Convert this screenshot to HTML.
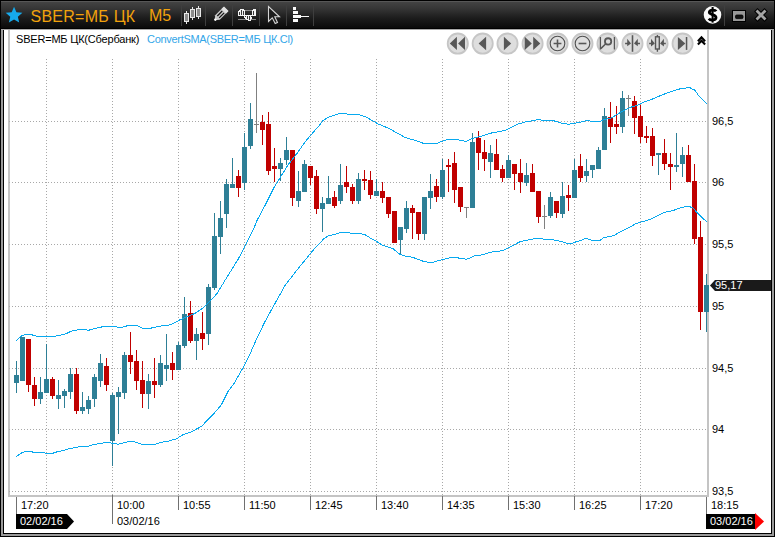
<!DOCTYPE html><html><head><meta charset="utf-8"><style>html,body{margin:0;padding:0;width:775px;height:537px;overflow:hidden;background:#fff}svg{display:block;position:absolute;left:0;top:0}text{font-family:"Liberation Sans",sans-serif}</style></head><body>
<svg width="775" height="537" viewBox="0 0 775 537">
<defs><linearGradient id="tb" x1="0" y1="0" x2="0" y2="1"><stop offset="0" stop-color="#474747"/><stop offset="0.3" stop-color="#363636"/><stop offset="0.65" stop-color="#1c1c1c"/><stop offset="1" stop-color="#0a0a0a"/></linearGradient></defs>
<rect x="0" y="0" width="775" height="537" fill="#fff"/>
<g shape-rendering="crispEdges">
<rect x="0" y="0" width="1" height="537" fill="#000"/>
<rect x="1" y="29" width="2" height="507" fill="#9a9a9a"/>
<rect x="3" y="30" width="1" height="504" fill="#000"/>
<rect x="774" y="0" width="1" height="537" fill="#000"/>
<rect x="772" y="29" width="2" height="507" fill="#9a9a9a"/>
<rect x="771" y="30" width="1" height="504" fill="#000"/>
<rect x="0" y="536" width="775" height="1" fill="#000"/>
<rect x="1" y="534" width="773" height="2" fill="#9a9a9a"/>
<rect x="3" y="533" width="769" height="1" fill="#000"/>
<rect x="0" y="0" width="775" height="28" fill="url(#tb)"/>
<rect x="0" y="0" width="775" height="1" fill="#000"/>
<rect x="1" y="1" width="773" height="1" fill="#575757"/>
<rect x="0" y="28" width="775" height="1" fill="#000"/>
<rect x="1" y="29" width="773" height="1" fill="#a8a8a8"/>
<rect x="0" y="0" width="1" height="29" fill="#000"/>
<rect x="774" y="0" width="1" height="29" fill="#000"/>
</g>
<g shape-rendering="crispEdges">
<rect x="8" y="30" width="2" height="467" fill="#c4c4c4"/>
<rect x="707" y="30" width="2" height="467" fill="#c4c4c4"/>
<rect x="8" y="495" width="701" height="2" fill="#c4c4c4"/>
<line x1="9" y1="121.5" x2="707" y2="121.5" stroke="#a8a8a8" stroke-width="1" stroke-dasharray="1 2"/>
<line x1="9" y1="182.5" x2="707" y2="182.5" stroke="#a8a8a8" stroke-width="1" stroke-dasharray="1 2"/>
<line x1="9" y1="244.5" x2="707" y2="244.5" stroke="#a8a8a8" stroke-width="1" stroke-dasharray="1 2"/>
<line x1="9" y1="306.5" x2="707" y2="306.5" stroke="#a8a8a8" stroke-width="1" stroke-dasharray="1 2"/>
<line x1="9" y1="368.5" x2="707" y2="368.5" stroke="#a8a8a8" stroke-width="1" stroke-dasharray="1 2"/>
<line x1="9" y1="429.5" x2="707" y2="429.5" stroke="#a8a8a8" stroke-width="1" stroke-dasharray="1 2"/>
<line x1="9" y1="491.5" x2="707" y2="491.5" stroke="#a8a8a8" stroke-width="1" stroke-dasharray="1 2"/>
<line x1="46.5" y1="59" x2="46.5" y2="495" stroke="#a8a8a8" stroke-width="1" stroke-dasharray="1 2"/>
<line x1="112.5" y1="59" x2="112.5" y2="495" stroke="#a8a8a8" stroke-width="1" stroke-dasharray="1 2"/>
<line x1="178.5" y1="59" x2="178.5" y2="495" stroke="#a8a8a8" stroke-width="1" stroke-dasharray="1 2"/>
<line x1="244.5" y1="59" x2="244.5" y2="495" stroke="#a8a8a8" stroke-width="1" stroke-dasharray="1 2"/>
<line x1="310.5" y1="59" x2="310.5" y2="495" stroke="#a8a8a8" stroke-width="1" stroke-dasharray="1 2"/>
<line x1="376.5" y1="59" x2="376.5" y2="495" stroke="#a8a8a8" stroke-width="1" stroke-dasharray="1 2"/>
<line x1="442.5" y1="59" x2="442.5" y2="495" stroke="#a8a8a8" stroke-width="1" stroke-dasharray="1 2"/>
<line x1="508.5" y1="59" x2="508.5" y2="495" stroke="#a8a8a8" stroke-width="1" stroke-dasharray="1 2"/>
<line x1="574.5" y1="59" x2="574.5" y2="495" stroke="#a8a8a8" stroke-width="1" stroke-dasharray="1 2"/>
<line x1="640.5" y1="59" x2="640.5" y2="495" stroke="#a8a8a8" stroke-width="1" stroke-dasharray="1 2"/>
</g>
<g shape-rendering="crispEdges">
<rect x="16" y="361" width="1" height="32" fill="#2e7f96"/>
<rect x="14" y="375" width="5" height="8" fill="#2e7f96"/>
<rect x="22" y="337" width="1" height="44" fill="#2e7f96"/>
<rect x="20" y="337" width="5" height="44" fill="#2e7f96"/>
<rect x="28" y="339" width="1" height="53" fill="#c00000"/>
<rect x="26" y="339" width="5" height="46" fill="#c00000"/>
<rect x="34" y="377" width="1" height="29" fill="#c00000"/>
<rect x="32" y="385" width="5" height="14" fill="#c00000"/>
<rect x="40" y="377" width="1" height="27" fill="#2e7f96"/>
<rect x="38" y="392" width="5" height="7" fill="#2e7f96"/>
<rect x="46" y="344" width="1" height="49" fill="#2e7f96"/>
<rect x="44" y="379" width="5" height="14" fill="#2e7f96"/>
<rect x="52" y="377" width="1" height="22" fill="#c00000"/>
<rect x="50" y="379" width="5" height="17" fill="#c00000"/>
<rect x="58" y="380" width="1" height="29" fill="#2e7f96"/>
<rect x="56" y="395" width="5" height="4" fill="#2e7f96"/>
<rect x="64" y="389" width="1" height="19" fill="#2e7f96"/>
<rect x="62" y="391" width="5" height="5" fill="#2e7f96"/>
<rect x="70" y="368" width="1" height="31" fill="#2e7f96"/>
<rect x="68" y="374" width="5" height="18" fill="#2e7f96"/>
<rect x="76" y="368" width="1" height="46" fill="#c00000"/>
<rect x="74" y="374" width="5" height="37" fill="#c00000"/>
<rect x="82" y="392" width="1" height="22" fill="#2e7f96"/>
<rect x="80" y="407" width="5" height="4" fill="#2e7f96"/>
<rect x="88" y="396" width="1" height="18" fill="#2e7f96"/>
<rect x="86" y="400" width="5" height="9" fill="#2e7f96"/>
<rect x="94" y="374" width="1" height="33" fill="#2e7f96"/>
<rect x="92" y="377" width="5" height="22" fill="#2e7f96"/>
<rect x="100" y="354" width="1" height="33" fill="#2e7f96"/>
<rect x="98" y="363" width="5" height="18" fill="#2e7f96"/>
<rect x="106" y="358" width="1" height="33" fill="#c00000"/>
<rect x="104" y="366" width="5" height="19" fill="#c00000"/>
<rect x="112" y="393" width="1" height="73" fill="#2e7f96"/>
<rect x="110" y="395" width="5" height="46" fill="#2e7f96"/>
<rect x="118" y="387" width="1" height="47" fill="#2e7f96"/>
<rect x="116" y="392" width="5" height="5" fill="#2e7f96"/>
<rect x="124" y="352" width="1" height="47" fill="#2e7f96"/>
<rect x="122" y="355" width="5" height="38" fill="#2e7f96"/>
<rect x="130" y="332" width="1" height="42" fill="#c00000"/>
<rect x="128" y="355" width="5" height="7" fill="#c00000"/>
<rect x="136" y="350" width="1" height="40" fill="#c00000"/>
<rect x="134" y="361" width="5" height="20" fill="#c00000"/>
<rect x="142" y="361" width="1" height="47" fill="#c00000"/>
<rect x="140" y="380" width="5" height="14" fill="#c00000"/>
<rect x="148" y="374" width="1" height="35" fill="#2e7f96"/>
<rect x="146" y="381" width="5" height="13" fill="#2e7f96"/>
<rect x="154" y="358" width="1" height="40" fill="#c00000"/>
<rect x="152" y="381" width="5" height="4" fill="#c00000"/>
<rect x="160" y="355" width="1" height="32" fill="#2e7f96"/>
<rect x="158" y="363" width="5" height="22" fill="#2e7f96"/>
<rect x="166" y="334" width="1" height="47" fill="#2e7f96"/>
<rect x="164" y="365" width="5" height="4" fill="#2e7f96"/>
<rect x="172" y="352" width="1" height="28" fill="#c00000"/>
<rect x="170" y="363" width="5" height="7" fill="#c00000"/>
<rect x="178" y="342" width="1" height="28" fill="#2e7f96"/>
<rect x="176" y="345" width="5" height="25" fill="#2e7f96"/>
<rect x="184" y="297" width="1" height="51" fill="#2e7f96"/>
<rect x="182" y="314" width="5" height="32" fill="#2e7f96"/>
<rect x="190" y="301" width="1" height="42" fill="#c00000"/>
<rect x="188" y="313" width="5" height="28" fill="#c00000"/>
<rect x="196" y="328" width="1" height="32" fill="#2e7f96"/>
<rect x="194" y="334" width="5" height="7" fill="#2e7f96"/>
<rect x="202" y="312" width="1" height="38" fill="#c00000"/>
<rect x="200" y="333" width="5" height="6" fill="#c00000"/>
<rect x="208" y="284" width="1" height="61" fill="#2e7f96"/>
<rect x="206" y="287" width="5" height="47" fill="#2e7f96"/>
<rect x="214" y="213" width="1" height="77" fill="#2e7f96"/>
<rect x="212" y="236" width="5" height="52" fill="#2e7f96"/>
<rect x="220" y="201" width="1" height="53" fill="#2e7f96"/>
<rect x="218" y="218" width="5" height="19" fill="#2e7f96"/>
<rect x="226" y="179" width="1" height="49" fill="#2e7f96"/>
<rect x="224" y="184" width="5" height="30" fill="#2e7f96"/>
<rect x="232" y="158" width="1" height="30" fill="#2e7f96"/>
<rect x="230" y="184" width="5" height="4" fill="#2e7f96"/>
<rect x="238" y="170" width="1" height="27" fill="#c00000"/>
<rect x="236" y="176" width="5" height="12" fill="#c00000"/>
<rect x="244" y="133" width="1" height="57" fill="#2e7f96"/>
<rect x="242" y="147" width="5" height="36" fill="#2e7f96"/>
<rect x="250" y="103" width="1" height="46" fill="#2e7f96"/>
<rect x="248" y="119" width="5" height="27" fill="#2e7f96"/>
<rect x="256" y="73" width="1" height="60" fill="#808080"/>
<rect x="254" y="124" width="5" height="1" fill="#808080"/>
<rect x="262" y="115" width="1" height="30" fill="#c00000"/>
<rect x="260" y="122" width="5" height="8" fill="#c00000"/>
<rect x="268" y="112" width="1" height="63" fill="#c00000"/>
<rect x="266" y="124" width="5" height="47" fill="#c00000"/>
<rect x="274" y="148" width="1" height="34" fill="#c00000"/>
<rect x="272" y="166" width="5" height="3" fill="#c00000"/>
<rect x="280" y="158" width="1" height="23" fill="#2e7f96"/>
<rect x="278" y="163" width="5" height="6" fill="#2e7f96"/>
<rect x="286" y="137" width="1" height="28" fill="#2e7f96"/>
<rect x="284" y="150" width="5" height="10" fill="#2e7f96"/>
<rect x="292" y="150" width="1" height="56" fill="#c00000"/>
<rect x="290" y="150" width="5" height="48" fill="#c00000"/>
<rect x="298" y="171" width="1" height="36" fill="#2e7f96"/>
<rect x="296" y="191" width="5" height="10" fill="#2e7f96"/>
<rect x="304" y="160" width="1" height="32" fill="#2e7f96"/>
<rect x="302" y="164" width="5" height="28" fill="#2e7f96"/>
<rect x="310" y="166" width="1" height="19" fill="#c00000"/>
<rect x="308" y="166" width="5" height="12" fill="#c00000"/>
<rect x="316" y="170" width="1" height="44" fill="#c00000"/>
<rect x="314" y="176" width="5" height="33" fill="#c00000"/>
<rect x="322" y="197" width="1" height="35" fill="#2e7f96"/>
<rect x="320" y="203" width="5" height="6" fill="#2e7f96"/>
<rect x="328" y="176" width="1" height="28" fill="#2e7f96"/>
<rect x="326" y="198" width="5" height="6" fill="#2e7f96"/>
<rect x="334" y="191" width="1" height="17" fill="#c00000"/>
<rect x="332" y="197" width="5" height="9" fill="#c00000"/>
<rect x="340" y="164" width="1" height="40" fill="#2e7f96"/>
<rect x="338" y="185" width="5" height="16" fill="#2e7f96"/>
<rect x="346" y="166" width="1" height="27" fill="#c00000"/>
<rect x="344" y="182" width="5" height="5" fill="#c00000"/>
<rect x="352" y="184" width="1" height="20" fill="#c00000"/>
<rect x="350" y="187" width="5" height="14" fill="#c00000"/>
<rect x="358" y="173" width="1" height="31" fill="#2e7f96"/>
<rect x="356" y="179" width="5" height="22" fill="#2e7f96"/>
<rect x="364" y="170" width="1" height="20" fill="#c00000"/>
<rect x="362" y="179" width="5" height="2" fill="#c00000"/>
<rect x="370" y="171" width="1" height="28" fill="#c00000"/>
<rect x="368" y="180" width="5" height="15" fill="#c00000"/>
<rect x="376" y="179" width="1" height="17" fill="#2e7f96"/>
<rect x="374" y="191" width="5" height="5" fill="#2e7f96"/>
<rect x="382" y="182" width="1" height="21" fill="#c00000"/>
<rect x="380" y="191" width="5" height="7" fill="#c00000"/>
<rect x="388" y="197" width="1" height="21" fill="#c00000"/>
<rect x="386" y="197" width="5" height="17" fill="#c00000"/>
<rect x="394" y="211" width="1" height="32" fill="#c00000"/>
<rect x="392" y="211" width="5" height="32" fill="#c00000"/>
<rect x="400" y="227" width="1" height="27" fill="#2e7f96"/>
<rect x="398" y="227" width="5" height="13" fill="#2e7f96"/>
<rect x="406" y="201" width="1" height="32" fill="#2e7f96"/>
<rect x="404" y="208" width="5" height="21" fill="#2e7f96"/>
<rect x="412" y="205" width="1" height="34" fill="#c00000"/>
<rect x="410" y="208" width="5" height="5" fill="#c00000"/>
<rect x="418" y="212" width="1" height="28" fill="#c00000"/>
<rect x="416" y="212" width="5" height="22" fill="#c00000"/>
<rect x="424" y="197" width="1" height="43" fill="#2e7f96"/>
<rect x="422" y="197" width="5" height="37" fill="#2e7f96"/>
<rect x="430" y="174" width="1" height="35" fill="#2e7f96"/>
<rect x="428" y="191" width="5" height="7" fill="#2e7f96"/>
<rect x="436" y="179" width="1" height="23" fill="#c00000"/>
<rect x="434" y="186" width="5" height="11" fill="#c00000"/>
<rect x="442" y="159" width="1" height="40" fill="#2e7f96"/>
<rect x="440" y="170" width="5" height="27" fill="#2e7f96"/>
<rect x="448" y="159" width="1" height="33" fill="#c00000"/>
<rect x="446" y="165" width="5" height="2" fill="#c00000"/>
<rect x="454" y="152" width="1" height="51" fill="#c00000"/>
<rect x="452" y="163" width="5" height="27" fill="#c00000"/>
<rect x="460" y="187" width="1" height="25" fill="#c00000"/>
<rect x="458" y="187" width="5" height="20" fill="#c00000"/>
<rect x="466" y="207" width="1" height="11" fill="#808080"/>
<rect x="464" y="207" width="5" height="1" fill="#808080"/>
<rect x="472" y="133" width="1" height="75" fill="#2e7f96"/>
<rect x="470" y="142" width="5" height="66" fill="#2e7f96"/>
<rect x="478" y="131" width="1" height="39" fill="#c00000"/>
<rect x="476" y="138" width="5" height="15" fill="#c00000"/>
<rect x="484" y="140" width="1" height="31" fill="#c00000"/>
<rect x="482" y="152" width="5" height="7" fill="#c00000"/>
<rect x="490" y="145" width="1" height="33" fill="#2e7f96"/>
<rect x="488" y="153" width="5" height="9" fill="#2e7f96"/>
<rect x="496" y="139" width="1" height="31" fill="#c00000"/>
<rect x="494" y="154" width="5" height="16" fill="#c00000"/>
<rect x="502" y="165" width="1" height="17" fill="#c00000"/>
<rect x="500" y="169" width="5" height="9" fill="#c00000"/>
<rect x="508" y="155" width="1" height="23" fill="#2e7f96"/>
<rect x="506" y="160" width="5" height="18" fill="#2e7f96"/>
<rect x="514" y="164" width="1" height="26" fill="#c00000"/>
<rect x="512" y="164" width="5" height="10" fill="#c00000"/>
<rect x="520" y="159" width="1" height="34" fill="#c00000"/>
<rect x="518" y="173" width="5" height="9" fill="#c00000"/>
<rect x="526" y="163" width="1" height="23" fill="#2e7f96"/>
<rect x="524" y="175" width="5" height="8" fill="#2e7f96"/>
<rect x="532" y="164" width="1" height="28" fill="#c00000"/>
<rect x="530" y="173" width="5" height="19" fill="#c00000"/>
<rect x="538" y="191" width="1" height="32" fill="#c00000"/>
<rect x="536" y="191" width="5" height="26" fill="#c00000"/>
<rect x="544" y="205" width="1" height="24" fill="#808080"/>
<rect x="542" y="216" width="5" height="1" fill="#808080"/>
<rect x="550" y="192" width="1" height="26" fill="#2e7f96"/>
<rect x="548" y="197" width="5" height="19" fill="#2e7f96"/>
<rect x="556" y="201" width="1" height="17" fill="#c00000"/>
<rect x="554" y="201" width="5" height="12" fill="#c00000"/>
<rect x="562" y="182" width="1" height="36" fill="#2e7f96"/>
<rect x="560" y="196" width="5" height="18" fill="#2e7f96"/>
<rect x="568" y="185" width="1" height="26" fill="#c00000"/>
<rect x="566" y="195" width="5" height="3" fill="#c00000"/>
<rect x="574" y="159" width="1" height="39" fill="#2e7f96"/>
<rect x="572" y="170" width="5" height="28" fill="#2e7f96"/>
<rect x="580" y="154" width="1" height="28" fill="#c00000"/>
<rect x="578" y="166" width="5" height="12" fill="#c00000"/>
<rect x="586" y="159" width="1" height="23" fill="#2e7f96"/>
<rect x="584" y="171" width="5" height="5" fill="#2e7f96"/>
<rect x="592" y="165" width="1" height="13" fill="#2e7f96"/>
<rect x="590" y="165" width="5" height="5" fill="#2e7f96"/>
<rect x="598" y="147" width="1" height="22" fill="#2e7f96"/>
<rect x="596" y="150" width="5" height="19" fill="#2e7f96"/>
<rect x="604" y="108" width="1" height="42" fill="#2e7f96"/>
<rect x="602" y="116" width="5" height="34" fill="#2e7f96"/>
<rect x="610" y="102" width="1" height="41" fill="#c00000"/>
<rect x="608" y="117" width="5" height="10" fill="#c00000"/>
<rect x="616" y="106" width="1" height="28" fill="#c00000"/>
<rect x="614" y="124" width="5" height="3" fill="#c00000"/>
<rect x="622" y="91" width="1" height="42" fill="#2e7f96"/>
<rect x="620" y="98" width="5" height="29" fill="#2e7f96"/>
<rect x="628" y="95" width="1" height="21" fill="#808080"/>
<rect x="626" y="98" width="5" height="1" fill="#808080"/>
<rect x="634" y="96" width="1" height="38" fill="#c00000"/>
<rect x="632" y="101" width="5" height="17" fill="#c00000"/>
<rect x="640" y="105" width="1" height="38" fill="#c00000"/>
<rect x="638" y="116" width="5" height="21" fill="#c00000"/>
<rect x="646" y="126" width="1" height="17" fill="#c00000"/>
<rect x="644" y="136" width="5" height="2" fill="#c00000"/>
<rect x="652" y="128" width="1" height="38" fill="#c00000"/>
<rect x="650" y="136" width="5" height="20" fill="#c00000"/>
<rect x="658" y="153" width="1" height="22" fill="#2e7f96"/>
<rect x="656" y="153" width="5" height="2" fill="#2e7f96"/>
<rect x="664" y="139" width="1" height="31" fill="#c00000"/>
<rect x="662" y="153" width="5" height="11" fill="#c00000"/>
<rect x="670" y="153" width="1" height="37" fill="#c00000"/>
<rect x="668" y="164" width="5" height="3" fill="#c00000"/>
<rect x="676" y="133" width="1" height="39" fill="#2e7f96"/>
<rect x="674" y="165" width="5" height="2" fill="#2e7f96"/>
<rect x="682" y="147" width="1" height="30" fill="#2e7f96"/>
<rect x="680" y="155" width="5" height="9" fill="#2e7f96"/>
<rect x="688" y="145" width="1" height="37" fill="#c00000"/>
<rect x="686" y="155" width="5" height="27" fill="#c00000"/>
<rect x="694" y="164" width="1" height="80" fill="#c00000"/>
<rect x="692" y="181" width="5" height="58" fill="#c00000"/>
<rect x="700" y="221" width="1" height="109" fill="#c00000"/>
<rect x="698" y="237" width="5" height="75" fill="#c00000"/>
<rect x="706" y="274" width="1" height="58" fill="#2e7f96"/>
<rect x="704" y="285" width="5" height="27" fill="#2e7f96"/>
</g>
<polyline points="16.2,340.7 21.9,335.5 26.6,334.2 31.5,334.5 33.7,335.5 38.2,336.4 45.6,336.4 55.3,336.4 57.5,335.5 61.2,334.9 66.4,333.7 70.8,331.2 75.3,330.3 81.2,329.3 85.7,329.3 87.9,330.5 94.6,328.5 99.0,327.5 105.0,326.3 115.3,326.3 118.3,327.5 121.3,327.5 125.0,326.5 128.5,325.3 136.6,325.3 142.4,328.1 151.1,328.1 158.7,326.5 164.5,325.3 169.1,325.0 173.8,323.2 179.6,320.0 185.4,317.4 192.4,314.5 195.0,313.3 201.0,309.4 205.4,305.9 211.4,299.9 216.6,294.0 221.1,286.9 225.5,279.5 231.8,269.4 238.5,258.6 246.0,244.3 253.6,229.2 256.7,221.0 265.0,205.4 273.4,188.6 280.1,177.7 288.5,164.3 296.9,153.5 305.3,141.7 314.5,130.8 319.0,125.7 322.4,121.2 326.9,117.9 331.3,116.2 336.9,114.5 340.3,113.4 343.6,113.6 350.0,114.3 358.8,114.6 365.5,116.8 372.2,120.5 377.2,123.5 389.0,128.5 397.4,133.2 405.8,137.8 414.2,140.0 423.4,143.3 436.8,143.3 447.7,139.4 457.0,139.7 466.2,141.4 472.0,138.6 478.8,136.9 487.1,134.4 490.0,133.4 493.9,132.4 500.1,131.5 505.5,130.3 508.6,128.6 513.2,126.3 517.1,124.3 521.0,123.3 524.1,122.2 528.7,121.5 533.3,120.4 539.5,119.4 542.6,120.4 550.0,120.4 553.2,120.6 561.9,123.2 568.5,124.3 577.3,122.8 587.2,120.4 592.6,121.5 599.9,121.3 603.7,119.8 611.5,117.8 616.9,114.7 621.5,111.6 627.0,108.9 632.4,106.6 636.2,105.8 639.3,104.3 644.0,102.0 650.0,100.0 655.0,98.0 660.1,95.7 665.5,93.6 672.4,91.3 678.6,89.3 681.7,88.3 685.6,88.3 687.2,87.4 689.5,87.4 691.8,88.8 694.1,89.6 697.2,93.2 698.0,95.0 706.9,103.6" fill="none" stroke="#08a9ef" stroke-width="1" shape-rendering="crispEdges"/>
<polyline points="16.2,456.5 22.6,452.4 27.1,451.4 31.5,451.7 33.7,452.4 43.4,452.4 46.4,453.5 53.0,453.2 57.5,451.7 63.4,450.5 70.1,448.4 75.3,447.6 81.2,446.5 88.6,446.2 94.6,444.3 100.5,443.5 105.7,442.5 112.4,443.1 118.3,444.3 124.5,442.5 130.4,441.4 134.1,441.7 141.5,444.3 155.6,444.3 160.1,442.5 169.0,441.0 176.4,438.8 183.8,434.3 191.2,432.1 201.6,426.2 211.4,416.2 217.0,410.1 221.5,404.5 225.4,396.7 228.2,391.1 233.4,384.5 242.6,368.6 250.2,353.5 256.6,339.0 264.5,322.5 273.5,306.1 285.2,285.2 296.9,270.1 309.5,254.7 313.5,249.8 317.7,245.1 323.9,238.8 328.8,235.5 334.2,234.7 340.4,232.4 348.9,232.4 351.2,233.5 360.5,233.5 365.1,234.7 371.3,238.6 376.0,240.9 382.2,245.1 388.4,247.1 393.0,248.6 400.0,254.5 405.2,256.1 410.3,256.8 415.5,258.3 423.2,261.3 428.4,262.2 433.5,262.2 438.7,260.4 443.9,259.4 451.6,257.4 456.8,257.4 459.4,258.3 463.2,258.3 465.8,259.4 469.7,258.1 473.5,256.1 480.0,255.2 485.2,253.9 490.3,252.5 494.8,251.4 500.0,251.0 503.2,250.6 507.7,248.0 512.9,245.4 520.6,241.5 525.8,240.5 531.0,239.4 537.4,238.3 541.3,238.3 543.9,239.4 552.9,239.4 555.5,240.5 560.6,241.2 565.2,242.8 569.0,243.7 571.6,243.5 576.1,241.8 581.3,240.3 585.8,238.3 590.3,239.9 592.9,240.5 596.0,240.7 599.4,240.7 604.4,237.3 611.1,236.5 614.4,235.2 621.1,231.4 631.2,226.4 636.2,223.5 640.4,222.2 650.0,219.5 654.6,217.4 660.1,214.4 664.7,212.4 669.3,211.3 673.2,210.5 679.4,208.3 682.5,207.4 686.4,206.6 689.5,206.6 691.8,207.5 693.3,208.3 697.2,212.8 702.6,218.2 706.9,221.7" fill="none" stroke="#08a9ef" stroke-width="1" shape-rendering="crispEdges"/>
<g font-size="11" fill="#000">
<text x="712" y="125">96,5</text>
<text x="712" y="186">96</text>
<text x="712" y="248">95,5</text>
<text x="712" y="310">95</text>
<text x="712" y="372">94,5</text>
<text x="712" y="433">94</text>
<text x="712" y="495">93,5</text>
</g>
<path d="M710,285.5 L715,280 L771,280 L771,291 L715,291 Z" fill="#1a1a1a"/>
<text x="715" y="289" font-size="11" fill="#fff">95,17</text>
<g shape-rendering="crispEdges">
<rect x="16" y="497" width="1" height="17" fill="#707070"/>
<rect x="112" y="495" width="1" height="29" fill="#707070"/>
<rect x="178" y="496" width="1" height="14" fill="#707070"/>
<rect x="244" y="496" width="1" height="14" fill="#707070"/>
<rect x="310" y="496" width="1" height="14" fill="#707070"/>
<rect x="376" y="496" width="1" height="14" fill="#707070"/>
<rect x="442" y="496" width="1" height="14" fill="#707070"/>
<rect x="508" y="496" width="1" height="14" fill="#707070"/>
<rect x="574" y="496" width="1" height="14" fill="#707070"/>
<rect x="640" y="496" width="1" height="14" fill="#707070"/>
<rect x="706" y="497" width="1" height="17" fill="#707070"/>
</g>
<g font-size="11" fill="#000">
<text x="21" y="509">17:20</text>
<text x="117" y="509">10:00</text>
<text x="183" y="509">10:55</text>
<text x="249" y="509">11:50</text>
<text x="315" y="509">12:45</text>
<text x="381" y="509">13:40</text>
<text x="447" y="509">14:35</text>
<text x="513" y="509">15:30</text>
<text x="579" y="509">16:25</text>
<text x="645" y="509">17:20</text>
<text x="711" y="509">18:15</text>
<text x="117" y="525">03/02/16</text>
</g>
<path d="M16,514 L67,514 L74,521.5 L67,529 L16,529 Z" fill="#000"/>
<text x="20" y="525" font-size="11" fill="#fff">02/02/16</text>
<rect x="706" y="514" width="50" height="15" fill="#000" shape-rendering="crispEdges"/>
<path d="M755,513 L764,521.5 L755,530 Z" fill="#f00"/>
<text x="710" y="525" font-size="11" fill="#fff">03/02/16</text>
<text x="16" y="43" font-size="11" fill="#000" letter-spacing="-0.2">SBER=МБ ЦК(Сбербанк)</text>
<text x="147" y="43" font-size="11" fill="#33a6e8" letter-spacing="-0.3">ConvertSMA(SBER=МБ ЦК.Cl)</text>
<polygon points="14.05,6.70 16.40,12.26 22.42,12.78 17.85,16.74 19.22,22.62 14.05,19.50 8.88,22.62 10.25,16.74 5.68,12.78 11.70,12.26" fill="#16aaec"/>
<text x="30.5" y="21.8" font-size="16" fill="#f2a20c" letter-spacing="0.25">SBER=МБ ЦК</text>
<text x="148.9" y="20.9" font-size="16" fill="#f2a20c">M5</text>
<g shape-rendering="crispEdges">
<rect x="181" y="5" width="1" height="21" fill="#3e3e3e"/>
<rect x="205" y="5" width="1" height="21" fill="#3e3e3e"/>
<rect x="232" y="5" width="1" height="21" fill="#3e3e3e"/>
<rect x="259" y="5" width="1" height="21" fill="#3e3e3e"/>
<rect x="286" y="5" width="1" height="21" fill="#3e3e3e"/>
<rect x="313" y="5" width="1" height="21" fill="#3e3e3e"/>
<rect x="724" y="5" width="1" height="21" fill="#3e3e3e"/>
</g>
<g shape-rendering="crispEdges">
<rect x="186" y="11" width="1" height="13" fill="#e8e8e8"/>
<rect x="184" y="13" width="5" height="9" fill="#e8e8e8"/>
<rect x="185" y="14" width="3" height="7" fill="#8c8c8c"/>
<rect x="192" y="7" width="1" height="13" fill="#e8e8e8"/>
<rect x="190" y="9" width="5" height="9" fill="#e8e8e8"/>
<rect x="191" y="10" width="3" height="7" fill="#8c8c8c"/>
<rect x="198" y="6" width="1" height="13" fill="#e8e8e8"/>
<rect x="196" y="8" width="5" height="9" fill="#e8e8e8"/>
<rect x="197" y="9" width="3" height="7" fill="#8c8c8c"/>
</g>
<g transform="translate(221,14) rotate(-45)"><path d="M-9,0 L-5,-3.2 L7,-3.2 L7,3.2 L-5,3.2 Z" fill="#c8c8c8"/><rect x="4" y="-3.2" width="3.5" height="6.4" fill="#e0e0e0"/><rect x="-4" y="-1.8" width="7" height="1.2" fill="#111"/><rect x="-4" y="0.8" width="7" height="1.2" fill="#111"/><circle cx="-8" cy="0" r="1.2" fill="#fff"/></g>
<g shape-rendering="crispEdges">
<rect x="245" y="10" width="8" height="1" fill="#8a8a8a"/>
<rect x="238" y="19" width="8" height="1" fill="#8a8a8a"/>
<rect x="251" y="19" width="5" height="1" fill="#8a8a8a"/>
<rect x="240" y="9" width="4" height="1" fill="#f4f4f4"/>
<rect x="253" y="9" width="3" height="1" fill="#f4f4f4"/>
<rect x="239" y="10" width="6" height="1" fill="#f4f4f4"/>
<rect x="252" y="10" width="4" height="1" fill="#f4f4f4"/>
<rect x="238" y="11" width="7" height="1" fill="#f4f4f4"/>
<rect x="252" y="11" width="4" height="1" fill="#f4f4f4"/>
<rect x="238" y="12" width="7" height="1" fill="#f4f4f4"/>
<rect x="252" y="12" width="4" height="1" fill="#f4f4f4"/>
<rect x="238" y="13" width="7" height="1" fill="#f4f4f4"/>
<rect x="252" y="13" width="4" height="1" fill="#f4f4f4"/>
<rect x="238" y="14" width="7" height="1" fill="#f4f4f4"/>
<rect x="252" y="14" width="4" height="1" fill="#f4f4f4"/>
<rect x="238" y="15" width="18" height="1" fill="#f4f4f4"/>
<rect x="244" y="16" width="8" height="1" fill="#f4f4f4"/>
<rect x="244" y="17" width="8" height="1" fill="#f4f4f4"/>
<rect x="245" y="18" width="7" height="1" fill="#f4f4f4"/>
<rect x="246" y="19" width="5" height="1" fill="#f4f4f4"/>
<rect x="248" y="20" width="3" height="1" fill="#f4f4f4"/>
<rect x="239" y="12" width="1" height="3" fill="#3a3a3a"/>
<rect x="241" y="10" width="1" height="5" fill="#3a3a3a"/>
<rect x="243" y="11" width="1" height="4" fill="#3a3a3a"/>
<rect x="253" y="11" width="1" height="4" fill="#3a3a3a"/>
<rect x="247" y="16" width="1" height="3" fill="#3a3a3a"/>
<rect x="249" y="16" width="1" height="4" fill="#3a3a3a"/>
<rect x="245" y="16" width="1" height="1" fill="#3a3a3a"/>
<rect x="251" y="16" width="1" height="1" fill="#3a3a3a"/>
</g>
<path d="M268.5,6.5 L268.5,21.5 L272.3,17.8 L275.2,23.5 L277.5,22.5 L274.8,16.8 L279.5,16.8 Z" fill="#1c1c1c" stroke="#d4d4d4" stroke-width="1.1" stroke-linejoin="miter"/>
<g shape-rendering="crispEdges">
<rect x="293" y="7" width="3" height="3" fill="#fafafa"/>
<rect x="293" y="11" width="5" height="3" fill="#fafafa"/>
<rect x="293" y="15" width="8" height="3" fill="#fafafa"/>
<rect x="301" y="16" width="8" height="1" fill="#fafafa"/>
<rect x="293" y="19" width="5" height="3" fill="#fafafa"/>
</g>
<circle cx="712.5" cy="14.85" r="8.8" fill="#fafafa"/>
<path d="M716.2,11.3 C715.2,9.6 709.6,9.4 709.3,12.2 C709,15 716,14.2 716,17.6 C716,20.6 710.3,20.6 708.8,18.6" fill="none" stroke="#000" stroke-width="2.8"/>
<rect x="711.6" y="7" width="2" height="15.6" fill="#000"/>
<rect x="732.5" y="10.5" width="13" height="11" fill="#989898" stroke="#000" stroke-width="1"/>
<rect x="735.5" y="15" width="7.5" height="3.6" rx="1.2" fill="#111" stroke="#000" stroke-width="0.8"/>
<path d="M757.5,11.5 L764.5,18.5 M764.5,11.5 L757.5,18.5" stroke="#000" stroke-width="4.8" stroke-linecap="square"/>
<path d="M757.5,11.5 L764.5,18.5 M764.5,11.5 L757.5,18.5" stroke="#a4a4a4" stroke-width="2.8" stroke-linecap="square"/>
<circle cx="457.8" cy="43.6" r="10.1" fill="#dedede" stroke="#c6c6c6" stroke-width="1.8"/>
<circle cx="482.7" cy="43.6" r="10.1" fill="#dedede" stroke="#c6c6c6" stroke-width="1.8"/>
<circle cx="507.5" cy="43.6" r="10.1" fill="#dedede" stroke="#c6c6c6" stroke-width="1.8"/>
<circle cx="532.6" cy="43.6" r="10.1" fill="#dedede" stroke="#c6c6c6" stroke-width="1.8"/>
<circle cx="557.5" cy="43.6" r="10.1" fill="#dedede" stroke="#c6c6c6" stroke-width="1.8"/>
<circle cx="582.5" cy="43.6" r="10.1" fill="#dedede" stroke="#c6c6c6" stroke-width="1.8"/>
<circle cx="607.5" cy="43.6" r="10.1" fill="#dedede" stroke="#c6c6c6" stroke-width="1.8"/>
<circle cx="632.5" cy="43.6" r="10.1" fill="#dedede" stroke="#c6c6c6" stroke-width="1.8"/>
<circle cx="657.5" cy="43.6" r="10.1" fill="#dedede" stroke="#c6c6c6" stroke-width="1.8"/>
<circle cx="682.6" cy="43.6" r="10.1" fill="#dedede" stroke="#c6c6c6" stroke-width="1.8"/>
<path d="M449.8,43.5 L456.9,36.8 L456.9,50.1 Z M458.1,43.5 L465,36.8 L465,50.1 Z" fill="#575757"/>
<path d="M478.6,43.5 L486.1,36.7 L486.1,50.2 Z" fill="#575757"/>
<path d="M511.2,43.5 L503.9,36.7 L503.9,50.2 Z" fill="#575757"/>
<path d="M524.7,36.8 L531.8,43.5 L524.7,50.1 Z M533.2,36.8 L540.3,43.5 L533.2,50.1 Z" fill="#575757"/>
<circle cx="557.5" cy="43.5" r="7.3" fill="none" stroke="#505050" stroke-width="1.1"/>
<path d="M553.6,43.5 L561.4,43.5 M557.5,39.6 L557.5,47.4" stroke="#575757" stroke-width="1.6"/>
<circle cx="582.5" cy="43.5" r="7.3" fill="none" stroke="#505050" stroke-width="1.1"/>
<path d="M578.6,43.5 L586.4,43.5" stroke="#575757" stroke-width="1.6"/>
<path d="M600.4,37 L600.4,49.6 M614.4,37 L614.4,49.6" stroke="#575757" stroke-width="1.3"/>
<circle cx="608.1" cy="41.4" r="3.15" fill="none" stroke="#575757" stroke-width="1.8"/>
<path d="M605.8,43.8 L600.8,48.6" stroke="#575757" stroke-width="1.5"/>
<path d="M632.5,35.2 L632.5,51.8" stroke="#575757" stroke-width="1.6"/>
<path d="M625.1,43.5 L628,43.5 M637,43.5 L640,43.5" stroke="#575757" stroke-width="1.4"/>
<path d="M627.2,38.7 L631,43.5 L627.2,46.3 Z M637.8,38.7 L634,43.5 L637.8,46.3 Z" fill="#575757"/>
<path d="M657.4,34.9 L657.4,51.8" stroke="#575757" stroke-width="1.4"/>
<rect x="655.5" y="36.8" width="3.8" height="12.2" fill="#d8d8d8" stroke="#575757" stroke-width="1.4"/>
<path d="M649.1,43.5 L652,43.5 M663,43.5 L665.8,43.5" stroke="#575757" stroke-width="1.4"/>
<path d="M651,38.8 L654.8,43.5 L651,46.5 Z M663.9,38.8 L660.1,43.5 L663.9,46.5 Z" fill="#575757"/>
<path d="M677.9,37 L685.3,43.5 L677.9,49.9 Z" fill="#575757"/>
<rect x="685.8" y="37" width="1.5" height="12.9" fill="#575757"/>
<path d="M697.9,44.5 L701.5,40.7 L705.1,44.5 M697.9,41.2 L701.5,37.4 L705.1,41.2" fill="none" stroke="#000" stroke-width="2.1"/>
</svg></body></html>
